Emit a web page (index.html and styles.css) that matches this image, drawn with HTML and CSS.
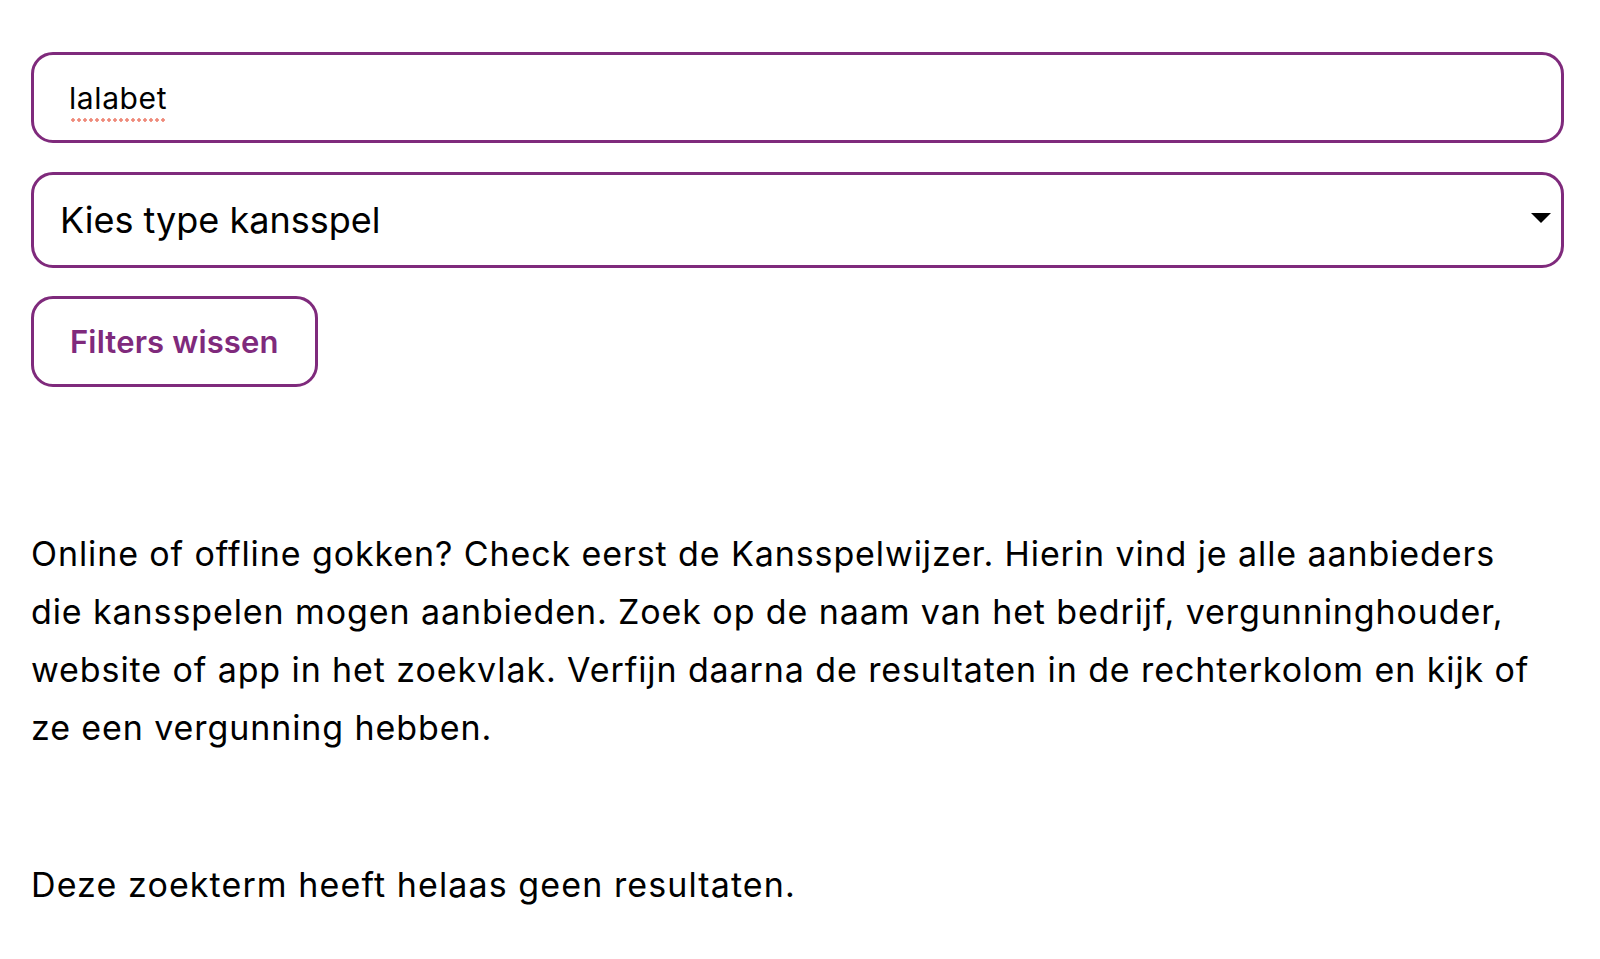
FILE: index.html
```html
<!DOCTYPE html>
<html lang="nl">
<head>
<meta charset="utf-8">
<title>Kansspelwijzer</title>
<link rel="stylesheet" href="styles.css">
</head>
<body>
<main class="page">
  <form class="filters">
    <div class="search-field"><span class="typed">lalabet</span></div>
    <div class="select-field">
      <span class="select-label">Kies type kansspel</span>
      <svg class="caret" width="20" height="10" viewBox="0 0 20 10"><path d="M0 0 H20 L10 10 Z" fill="#000"/></svg>
    </div>
    <div class="actions"><button type="button" class="clear-btn">Filters wissen</button></div>
  </form>
  <p class="intro">Online of offline gokken? Check eerst de Kansspelwijzer. Hierin vind je alle aanbieders die kansspelen mogen aanbieden. Zoek op de naam van het bedrijf, vergunninghouder, website of app in het zoekvlak. Verfijn daarna de resultaten in de rechterkolom en kijk of ze een vergunning hebben.</p>
  <p class="no-results">Deze zoekterm heeft helaas geen resultaten.</p>
</main>
</body>
</html>
```
FILE: styles.css
```css
* { box-sizing: border-box; }
html, body { margin: 0; padding: 0; background: #fff; }
body {
  font-family: "Inter", "Roboto", "Liberation Sans", sans-serif;
  color: #000;
}
.page {
  padding: 52px 36px 40px 31px;
}
.filters {
  display: flex;
  flex-direction: column;
  gap: 29px;
}
.search-field {
  height: 91px;
  border: 3px solid #7f2a7c;
  border-radius: 22px;
  display: flex;
  align-items: center;
  padding: 0 35px;
  font-size: 30px;
  letter-spacing: 0.6px;
}
.typed {
  position: relative;
  line-height: 1;
}
.typed::after {
  content: "";
  position: absolute;
  left: 1px;
  right: 0;
  bottom: -9px;
  height: 4px;
  background: radial-gradient(circle, #ef8a7a 1.5px, transparent 2px) 0 0 / 6px 4px repeat-x;
}
.select-field {
  height: 96px;
  border: 3px solid #7f2a7c;
  border-radius: 22px;
  display: flex;
  align-items: center;
  justify-content: space-between;
  padding: 0 10px 0 26px;
  font-size: 36px;
}
.caret { margin-top: -4px; }
.actions { display: flex; }
.clear-btn {
  height: 91px;
  border: 3px solid #7f2a7c;
  border-radius: 22px;
  background: #fff;
  color: #7f2a7c;
  font-family: inherit;
  font-size: 31px;
  font-weight: 600;
  letter-spacing: 0.15px;
  padding: 0 36px;
  margin-top: -1px;
}
.intro {
  margin: 138px 20px 0 0;
  font-size: 34px;
  letter-spacing: 0.9px;
  line-height: 58px;
}
.no-results {
  margin: 99px 0 0;
  font-size: 34px;
  letter-spacing: 1.1px;
  line-height: 58px;
}
```
